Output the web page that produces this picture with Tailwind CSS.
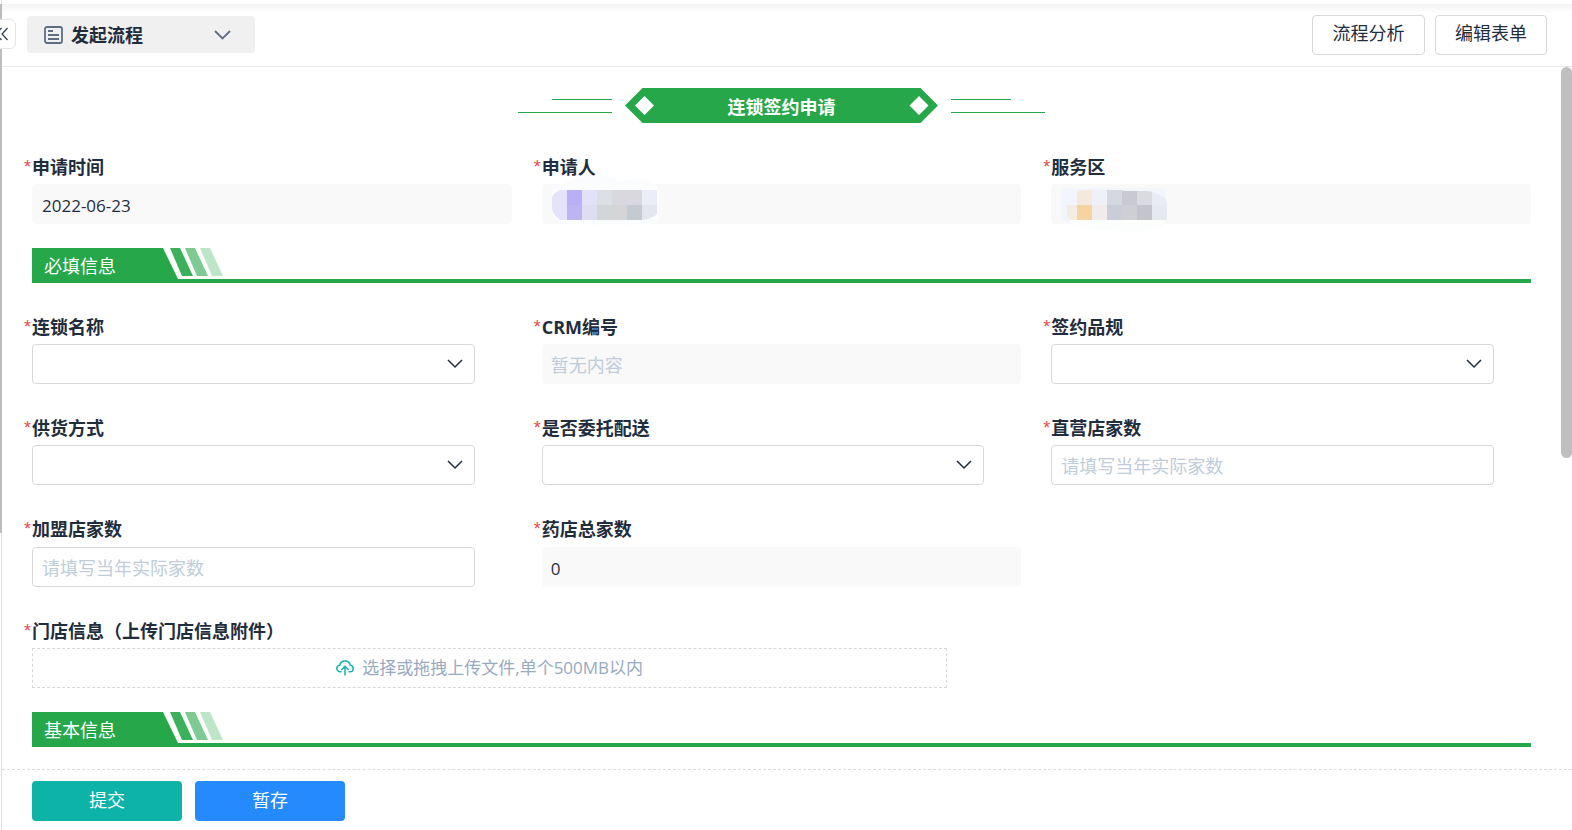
<!DOCTYPE html>
<html lang="zh-CN">

<head>
  <meta charset="UTF-8" />
  <meta name="viewport" content="width=device-width, initial-scale=1.0" />
  <title>发起流程</title>
  <script src="https://cdn.jsdelivr.net/npm/@tailwindcss/browser@4"></script>
</head>

<body class="bg-white text-[18px] text-[#1f2d3d] font-['Open_Sans','Noto_Sans_CJK_SC',sans-serif]">
  <div class="relative flex flex-col min-h-screen border-l border-[#e0e1e6] ml-px">
    <!-- Side panel scrollbar and collapse button -->
    <div class="absolute -left-[2px] top-1 w-[2px] h-[529px] bg-[#bdbdbd]"></div>
    <button aria-label="收起" class="absolute -left-4 top-[19px] z-10 w-[30px] h-[30px] bg-white border border-[#e4e4e4] rounded-md">
      <svg class="absolute left-[8px] top-[7px]" width="13" height="14" viewBox="0 0 13 14" fill="none" stroke="#2c3a4d" stroke-width="1.2">
        <path d="M6.5 1L1 7l5.500 6M12.500 1L7 7l5.500 6" />
      </svg>
    </button>

    <!-- Header -->
    <header class="mt-1 h-[63px] px-[25px] flex items-center justify-between border-b border-[#e8e8e8] bg-linear-to-b from-[#f3f3f3] to-white to-15%">
      <button class="flex items-center w-[228px] h-[37px] -mt-px pl-[17px] pr-6 bg-[#f0f0f0] rounded text-left font-bold">
        <svg width="19" height="18" viewBox="0 0 19 18" fill="none" stroke="#5e6d82">
          <rect x="1" y="1" width="17" height="16" rx="2" stroke-width="1.800" />
          <path d="M4 5h5M4 9h11M4 13h11" stroke-width="2" />
        </svg>
        <span class="ml-2 pt-px grow">发起流程</span>
        <svg width="17" height="10" viewBox="0 0 17 10" fill="none" stroke="#5e6d82" stroke-width="1.800">
          <path d="M1 1l7.500 7.500L16 1" />
        </svg>
      </button>
      <div class="flex gap-[10px] -mt-px">
        <button class="w-[113px] h-10 pb-0.5 border border-[#d8d8d8] rounded">流程分析</button>
        <button class="w-[112px] h-10 pb-0.5 border border-[#d8d8d8] rounded">编辑表单</button>
      </div>
    </header>

    <main class="relative grow">
      <div class="absolute right-0 top-0 w-[11px] h-[391px] rounded-full bg-[#bfbfbf]"></div>

      <form id="signForm" class="flex flex-col gap-6 pl-[30px] pr-[41px] pt-[21px] pb-[21px]">
        <!-- Form title -->
        <div class="flex justify-center items-center gap-[13px] h-[35px]">
          <svg width="94" height="35" viewBox="0 0 94 35" fill="#26a84a">
            <path d="M34 11h60v1H34zM0 24h94v1H0z" />
          </svg>
          <h1 class="relative w-[313px] h-[35px] text-center text-white font-bold leading-[39px]">
            <svg class="absolute inset-0" width="313" height="35" viewBox="0 0 313 35">
              <path fill="#26a84a" d="M0 17.500L17.500 0h278L313 17.500 295.500 35h-278z" />
              <path fill="#fff" d="M10 17.500l9.500-9.500 9.500 9.500-9.500 9.500zM284.500 17.500l9.500-9.500 9.500 9.500-9.500 9.500z" />
            </svg>
            <span class="relative">连锁签约申请</span>
          </h1>
          <svg width="94" height="35" viewBox="0 0 94 35" fill="#26a84a">
            <path d="M0 11h60v1H0zM0 24h94v1H0z" />
          </svg>
        </div>

        <div class="grid grid-cols-3 gap-x-[30px]">
          <div>
            <label for="applyDate" class="flex h-[37px] -ml-2 font-bold leading-[41px]"><span class="w-2 font-normal text-[#e64c4c] font-['Liberation_Sans',sans-serif]">*</span>申请时间</label>
            <input id="applyDate" value="2022-06-23" readonly class="block w-full h-10 px-[10px] pt-[3px] rounded bg-[#f9f9f9] text-[17px] outline-none" />
          </div>
          <div>
            <label for="applicant" class="flex h-[37px] -ml-2 font-bold leading-[41px]"><span class="w-2 font-normal text-[#e64c4c] font-['Liberation_Sans',sans-serif]">*</span>申请人</label>
            <output id="applicant" class="block h-10 rounded bg-[#f9f9f9]">
              <svg class="overflow-visible" width="130" height="40" viewBox="0 0 130 40">
                <path fill="#fbfcfe" d="M10 6C22-3 42-10 62-8q12 1 16 6 18-6 30 0 8 4 9 9v31q-20 4-50 2-36 2-50-3-7-3-7-10z" />
                <clipPath id="maskA"><path d="M18 6h97v24q-4 4-14 6H18q-8-6-8-12V14q1-5 8-8z" /></clipPath>
                <g clip-path="url(#maskA)" shape-rendering="crispEdges">
                  <path fill="#e4e3f9" d="M10 6h15v30H10z" />
                  <path fill="#b8aff4" d="M25 6h15v15H25z" />
                  <path fill="#bdb5f2" d="M25 21h15v15H25z" />
                  <path fill="#e2e1f7" d="M40 6h15v15H40z" />
                  <path fill="#dfddf2" d="M40 21h15v15H40z" />
                  <path fill="#dcdfe4" d="M55 6h15v15H55z" />
                  <path fill="#d2d6d9" d="M55 21h15v15H55z" />
                  <path fill="#d8d8de" d="M70 6h30v15H70z" />
                  <path fill="#d5d4d7" d="M70 21h15v15H70z" />
                  <path fill="#c4cad0" d="M85 21h15v15H85z" />
                  <path fill="#ebeef8" d="M100 6h15v15h-15z" />
                  <path fill="#e3e6ee" d="M100 21h15v15h-15z" />
                </g>
              </svg>
            </output>
          </div>
          <div>
            <label for="area" class="flex h-[37px] -ml-2 font-bold leading-[41px]"><span class="w-2 font-normal text-[#e64c4c] font-['Liberation_Sans',sans-serif]">*</span>服务区</label>
            <output id="area" class="block h-10 rounded bg-[#f9f9f9]">
              <svg class="overflow-visible" width="130" height="50" viewBox="0 0 130 50">
                <rect x="10" y="4" width="105" height="34" rx="5" fill="#f3f5fd" />
                <path fill="#fcfdfd" d="M17 36h99q-3 8-16 11-24 2-50-1-27-1-33-10z" />
                <clipPath id="maskB"><path d="M30 6h40l3 1h22q16 1 21 11v18H18l-2-5V21h10V8z" /></clipPath>
                <g clip-path="url(#maskB)" shape-rendering="crispEdges">
                  <path fill="#f3ece2" d="M16 21h10v15H16z" />
                  <path fill="#f4e9dc" d="M26 6h15v15H26z" />
                  <path fill="#f7d49f" d="M26 21h15v15H26z" />
                  <path fill="#f0f1f8" d="M41 6h15v15H41z" />
                  <path fill="#f0ecec" d="M41 21h15v15H41z" />
                  <path fill="#d5d8e1" d="M56 6h15v15H56z" />
                  <path fill="#c9cdd7" d="M56 21h15v15H56z" />
                  <path fill="#c9cacf" d="M71 6h15v15H71z" />
                  <path fill="#cecfd4" d="M71 21h15v15H71z" />
                  <path fill="#dadbe0" d="M86 6h15v15H86z" />
                  <path fill="#c4c5cc" d="M86 21h15v15H86z" />
                  <path fill="#e9ecf5" d="M101 6h15v15h-15z" />
                  <path fill="#e6e9ef" d="M101 21h15v15h-15z" />
                </g>
              </svg>
            </output>
          </div>
        </div>

        <!-- Section: required info -->
        <div class="relative h-[35px] border-b-4 border-[#26a84a]">
          <svg class="absolute left-0 top-0" width="192" height="35" viewBox="0 0 192 35" fill="#26a84a">
            <path d="M0 0h131l15 31v4H0z" />
            <path d="M138 0h10l13 28h-11z" opacity=".9" />
            <path d="M153 0h10l13 28h-11z" opacity=".6" />
            <path d="M168 0h10l13 28h-11z" opacity=".3" />
          </svg>
          <h2 class="relative pl-3 text-white leading-[37px]">必填信息</h2>
        </div>

        <div class="grid grid-cols-3 gap-x-[30px] gap-y-6">
          <div>
            <label for="chainName" class="flex h-[37px] -ml-2 font-bold leading-[41px]"><span class="w-2 font-normal text-[#e64c4c] font-['Liberation_Sans',sans-serif]">*</span>连锁名称</label>
            <div class="relative mr-[37px]">
              <select id="chainName" class="block appearance-none w-full h-10 px-[10px] bg-white border border-[#d8d8d8] rounded"><option></option></select>
              <svg class="absolute right-3 top-[15px] pointer-events-none" width="16" height="10" viewBox="0 0 16 10" fill="none" stroke="#1f2d3d" stroke-width="1.500"><path d="M1 1l7 7 7-7" /></svg>
            </div>
          </div>
          <div>
            <label for="crmNo" class="flex h-[37px] -ml-2 font-bold leading-[41px]"><span class="w-2 font-normal text-[#e64c4c] font-['Liberation_Sans',sans-serif]">*</span>CRM编号</label>
            <input id="crmNo" placeholder="暂无内容" readonly class="block w-full h-10 px-[9px] pt-[2px] rounded bg-[#f9f9f9] placeholder:text-[#c0ccda] outline-none" />
          </div>
          <div>
            <label for="product" class="flex h-[37px] -ml-2 font-bold leading-[41px]"><span class="w-2 font-normal text-[#e64c4c] font-['Liberation_Sans',sans-serif]">*</span>签约品规</label>
            <div class="relative mr-[37px]">
              <select id="product" class="block appearance-none w-full h-10 px-[10px] bg-white border border-[#d8d8d8] rounded"><option></option></select>
              <svg class="absolute right-3 top-[15px] pointer-events-none" width="16" height="10" viewBox="0 0 16 10" fill="none" stroke="#1f2d3d" stroke-width="1.500"><path d="M1 1l7 7 7-7" /></svg>
            </div>
          </div>

          <div>
            <label for="supply" class="flex h-[37px] -ml-2 font-bold leading-[41px]"><span class="w-2 font-normal text-[#e64c4c] font-['Liberation_Sans',sans-serif]">*</span>供货方式</label>
            <div class="relative mr-[37px]">
              <select id="supply" class="block appearance-none w-full h-10 px-[10px] bg-white border border-[#d8d8d8] rounded"><option></option></select>
              <svg class="absolute right-3 top-[15px] pointer-events-none" width="16" height="10" viewBox="0 0 16 10" fill="none" stroke="#1f2d3d" stroke-width="1.500"><path d="M1 1l7 7 7-7" /></svg>
            </div>
          </div>
          <div>
            <label for="delivery" class="flex h-[37px] -ml-2 font-bold leading-[41px]"><span class="w-2 font-normal text-[#e64c4c] font-['Liberation_Sans',sans-serif]">*</span>是否委托配送</label>
            <div class="relative mr-[37px]">
              <select id="delivery" class="block appearance-none w-full h-10 px-[10px] bg-white border border-[#d8d8d8] rounded"><option></option></select>
              <svg class="absolute right-3 top-[15px] pointer-events-none" width="16" height="10" viewBox="0 0 16 10" fill="none" stroke="#1f2d3d" stroke-width="1.500"><path d="M1 1l7 7 7-7" /></svg>
            </div>
          </div>
          <div>
            <label for="directStores" class="flex h-[37px] -ml-2 font-bold leading-[41px]"><span class="w-2 font-normal text-[#e64c4c] font-['Liberation_Sans',sans-serif]">*</span>直营店家数</label>
            <div class="mr-[37px]">
              <input id="directStores" placeholder="请填写当年实际家数" class="block w-full h-10 px-[9px] pt-[2px] border border-[#d8d8d8] rounded placeholder:text-[#c0ccda] outline-none" />
            </div>
          </div>

          <div>
            <label for="joinStores" class="flex h-[38px] -ml-2 font-bold leading-[41px]"><span class="w-2 font-normal text-[#e64c4c] font-['Liberation_Sans',sans-serif]">*</span>加盟店家数</label>
            <div class="mr-[37px]">
              <input id="joinStores" placeholder="请填写当年实际家数" class="block w-full h-10 px-[9px] pt-[2px] border border-[#d8d8d8] rounded placeholder:text-[#c0ccda] outline-none" />
            </div>
          </div>
          <div>
            <label for="totalStores" class="flex h-[38px] -ml-2 font-bold leading-[41px]"><span class="w-2 font-normal text-[#e64c4c] font-['Liberation_Sans',sans-serif]">*</span>药店总家数</label>
            <input id="totalStores" value="0" readonly class="block w-full h-10 px-[9px] pt-[2px] rounded bg-[#f9f9f9] text-[17px] outline-none" />
          </div>

          <div class="col-span-2 col-start-1">
            <label for="storeFile" class="flex h-[37px] -ml-2 font-bold leading-[41px]"><span class="w-2 font-normal text-[#e64c4c] font-['Liberation_Sans',sans-serif]">*</span>门店信息（上传门店信息附件）</label>
            <label class="flex items-center justify-center gap-2 h-10 mr-[74px] border border-dashed border-[#d8d8d8] text-[17px] text-[#99a9bf] cursor-pointer">
              <input id="storeFile" type="file" class="sr-only" />
              <svg width="18" height="16" viewBox="0 0 18 16" fill="none" stroke="#13b5a8" stroke-width="1.500">
                <path d="M5.500 11.800H4.300C2.300 11.800 0.800 10.300 0.800 8.500c0-1.700 1.200-3 2.800-3.200C4.200 2.600 6.300 0.900 9 0.900s4.800 1.700 5.400 4.400c1.600.2 2.800 1.500 2.800 3.200 0 1.800-1.500 3.300-3.500 3.300h-1.200" />
                <path d="M9 15.500V6.500M5.300 10L9 6.300 12.700 10" />
              </svg>
              <span>选择或拖拽上传文件,单个500MB以内</span>
            </label>
          </div>
        </div>

        <!-- Section: basic info -->
        <div class="relative h-[35px] border-b-4 border-[#26a84a]">
          <svg class="absolute left-0 top-0" width="192" height="35" viewBox="0 0 192 35" fill="#26a84a">
            <path d="M0 0h131l15 31v4H0z" />
            <path d="M138 0h10l13 28h-11z" opacity=".9" />
            <path d="M153 0h10l13 28h-11z" opacity=".6" />
            <path d="M168 0h10l13 28h-11z" opacity=".3" />
          </svg>
          <h2 class="relative pl-3 text-white leading-[37px]">基本信息</h2>
        </div>
      </form>
    </main>

    <!-- Footer actions -->
    <footer class="flex gap-[13px] h-[61px] pl-[30px] pt-[11px] border-t border-dashed border-[#dcdcdc]">
      <button type="submit" form="signForm" class="w-[150px] h-10 pb-0.5 rounded bg-[#0db3a6] text-white">提交</button>
      <button type="button" class="w-[150px] h-10 pb-0.5 rounded bg-[#248afd] text-white">暂存</button>
    </footer>
  </div>
</body>

</html>
